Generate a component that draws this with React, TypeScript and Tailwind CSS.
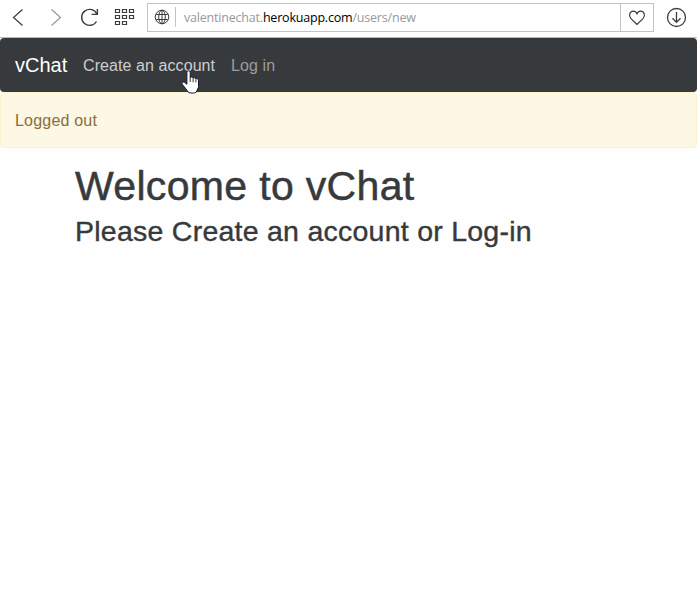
import React from "react";

function Toolbar() {
  return (
    <div className="flex h-[38px] items-start border-b border-[#b4b8ba] bg-white text-[#3c3c3c]">
      <svg className="shrink-0" width="147" height="36" viewBox="0 0 147 36" fill="none" stroke="currentColor">
        <path d="M22.5 9.5L13.5 17.5L22.5 25.5" strokeWidth="1.2" />
        <path d="M51.5 9.5L60.5 17.5L51.5 25.5" stroke="#999" strokeWidth="1.2" />
        <path d="M97 14.2A8 8 0 1 0 96.5 21.5" strokeWidth="1.4" />
        <path d="M97.4 9V14.4H91.5" strokeWidth="1.4" />
        <path
          d="M115.5 9.5h4v3h-4zM122.5 9.5h4v3h-4zM129.5 9.5h4v3h-4zM115.5 15.5h4v3h-4zM122.5 15.5h4v3h-4zM129.5 15.5h4v3h-4zM115.5 21.5h4v3h-4zM122.5 21.5h4v3h-4z"
          strokeWidth="1.2"
        />
      </svg>
      <div className="mt-[3px] flex h-[29px] w-[507px] shrink-0 items-center border border-[#c3c3c3]">
        <svg className="mb-px ml-[6px] shrink-0" width="16" height="16" viewBox="0 0 16 16" fill="none" stroke="currentColor" strokeWidth="1">
          <circle cx="8" cy="8" r="6.8" />
          <ellipse cx="8" cy="8" rx="3.3" ry="6.8" />
          <path d="M8 1.5v13M2.2 5.5h11.6M2.2 10.5h11.6" />
        </svg>
        <div className="mb-px ml-[5px] h-5 w-px bg-[#c3c3c3]" />
        <div className="ml-2 flex-1 whitespace-nowrap pt-px font-['Open_Sans','Noto_Sans',sans-serif] text-[12.5px] leading-none tracking-[-0.2px] text-[#999]">
          valentinechat.<span className="text-black">herokuapp.com</span>/users/new
        </div>
        <div className="flex h-full w-[33px] items-center justify-center border-l border-[#c3c3c3]">
          <svg width="18" height="18" viewBox="0 0 18 18" fill="none" stroke="currentColor" strokeWidth="1.2">
            <path d="M9 15.5L3 9.7C0 6.4 2 2.2 5.3 2.2C7.2 2.2 8.4 3.4 9 4.8C9.6 3.4 10.8 2.2 12.7 2.2C16 2.2 18 6.4 15 9.7Z" />
          </svg>
        </div>
      </div>
      <svg className="ml-3 mt-[7px] shrink-0" width="21" height="21" viewBox="0 0 21 21" fill="none" stroke="currentColor" strokeWidth="1.3">
        <circle cx="10.5" cy="10.5" r="9" />
        <path d="M10.5 5v10.5M6.5 11.2l4 4.2l4-4.2" />
      </svg>
    </div>
  );
}

function Pointer() {
  return (
    <svg className="absolute left-[181px] top-[70px]" width="19" height="25" viewBox="0 0 19 25">
      <path
        d="M5.9 2.6C5.9 .2 9.2 .2 9.2 2.6V7.6C9.8 6.6 12 6.9 12.1 8.2C12.8 7.3 14.8 7.6 14.9 9C15.6 8.3 17.5 8.7 17.5 10.7V16.5C17.5 18.5 16 19.5 15.5 22C13.5 23.5 9 23.5 7 22C5.5 19.5 3.8 17.3 1.6 14.8C.2 13 2 11.3 3.8 12.5L5.9 14.3Z"
        fill="white"
        stroke="#17172b"
        strokeWidth="1"
      />
      <path d="M9.2 7.5v4.5M12.1 8.4v3.8M14.9 9.4v3" stroke="#17172b" strokeWidth="0.9" />
    </svg>
  );
}

export default function App() {
  return (
    <div className="relative h-[606px] w-[697px] overflow-hidden bg-[#fefefe] font-['Liberation_Sans',Arial,sans-serif] text-[#373a3c]">
      <Toolbar />
      <nav className="flex h-[54px] items-center whitespace-nowrap rounded bg-[#373a3c] px-[15px]">
        <a className="w-[53px] text-[20px] leading-[30px] text-white">vChat</a>
        <a className="ml-[15px] w-[133px] pt-0.5 text-[16px] leading-6 tracking-[0.08px] text-[#cdcecf]">Create an account</a>
        <a className="ml-[15px] pt-0.5 text-[16px] leading-6 tracking-[0.1px] text-[#9b9d9e]">Log in</a>
      </nav>
      <div className="flex h-14 items-center rounded border border-[#faf2cc] bg-[#fcf8e3] px-[14px] pt-0.5 text-[16px] tracking-[0.2px] text-[#8a6d3b]">
        Logged out
      </div>
      <main className="whitespace-nowrap pl-[75px] pt-4">
        <h1 className="text-[41px] font-medium leading-[44px] tracking-[0.33px] [-webkit-text-stroke:0.5px_#373a3c]">Welcome to vChat</h1>
        <h3 className="mt-2 text-[28.5px] font-medium leading-[31px] tracking-[0.25px] [-webkit-text-stroke:0.4px_#373a3c]">
          Please Create an account or Log-in
        </h3>
      </main>
      <Pointer />
    </div>
  );
}
